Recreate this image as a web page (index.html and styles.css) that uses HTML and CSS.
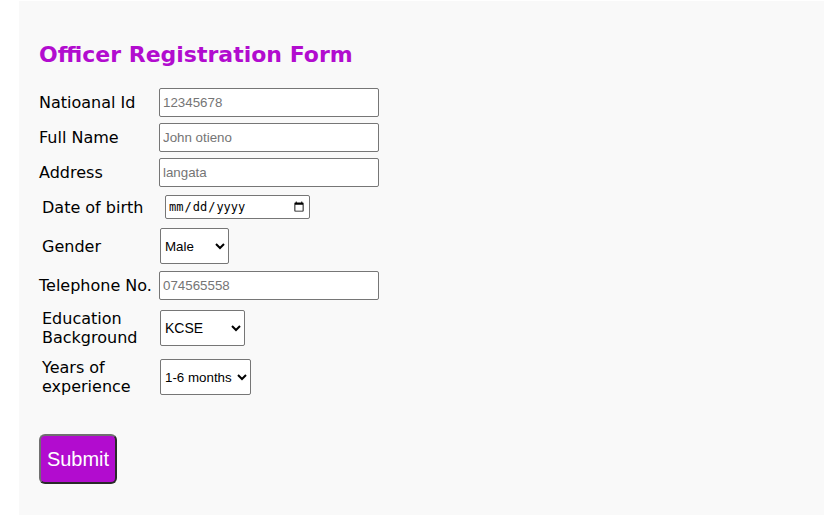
FILE: index.html
```html
<!DOCTYPE html>
<html>
<head>
<meta charset="utf-8">
<link rel="stylesheet" href="styles.css">
</head>
<body>
<div class="panel">
  <h2 class="title">Officer Registration Form</h2>
  <form class="form">
    <div class="row r1">
      <label class="lbl">Natioanal Id</label>
      <input class="txt" type="text" placeholder="12345678">
    </div>
    <div class="row r2">
      <label class="lbl">Full Name</label>
      <input class="txt" type="text" placeholder="John otieno">
    </div>
    <div class="row r3">
      <label class="lbl">Address</label>
      <input class="txt" type="text" placeholder="langata">
    </div>
    <div class="row r4">
      <label class="lbl ind">Date of birth</label>
      <input class="date" type="date">
    </div>
    <div class="row r5">
      <label class="lbl ind">Gender</label>
      <select class="sel sel-gender"><option>Male</option><option>Female</option></select>
    </div>
    <div class="row r6">
      <label class="lbl">Telephone No.</label>
      <input class="txt" type="text" placeholder="074565558">
    </div>
    <div class="row r7">
      <label class="lbl ind two">Education<br>Background</label>
      <select class="sel sel-edu"><option>KCSE</option><option>Diploma</option></select>
    </div>
    <div class="row r8">
      <label class="lbl ind two">Years of<br>experience</label>
      <select class="sel sel-years"><option>1-6 months</option><option>1-2 years</option></select>
    </div>
    <div class="actions">
      <button type="button" class="submit">Submit</button>
    </div>
  </form>
</div>
</body>
</html>
```
FILE: styles.css
```css
html, body {
  margin: 0;
  padding: 0;
  background: #ffffff;
}
.panel {
  box-sizing: border-box;
  margin: 1px 0 0 19px;
  height: 514px;
  overflow: hidden;
  background: #f9f9f9;
  padding: 40px 20px 0 20px;
  font-family: "DejaVu Sans", sans-serif;
}
.title {
  margin: 0;
  font-size: 22px;
  line-height: 27px;
  font-weight: bold;
  color: #b20ccf;
}
.form {
  display: flex;
  flex-direction: column;
  margin-top: 20px;
}
.row {
  display: flex;
  align-items: center;
}
.lbl {
  width: 120px;
  font-size: 16px;
  line-height: 19px;
  color: #000;
}
.lbl.ind {
  padding-left: 3px;
  width: 117px;
}
.r1 { height: 29px; }
.r2 { height: 29px; margin-top: 6px; }
.r3 { height: 29px; margin-top: 6px; }
.r4 { height: 24px; margin-top: 8px; }
.r5 { height: 36px; margin-top: 9px; }
.r6 { height: 29px; margin-top: 7px; }
.r7 { height: 36px; margin-top: 10px; }
.r8 { height: 36px; margin-top: 13px; }
.txt {
  box-sizing: border-box;
  width: 220px;
  height: 29px;
  margin: 0;
  padding: 1px 3px;
  border: 1px solid #767676;
  border-radius: 2px;
  background: #fff;
  font-family: "Liberation Sans", Arial, sans-serif;
  font-size: 13.33px;
}
.txt::placeholder {
  color: #757575;
}
.date {
  box-sizing: border-box;
  width: 145px;
  height: 24px;
  margin: 0 0 0 6px;
  padding: 1px 2px;
  border: 1px solid #767676;
  border-radius: 2px;
  background: #fff;
  font-family: "DejaVu Sans Mono", monospace;
  font-size: 12px;
}
.sel {
  box-sizing: border-box;
  height: 36px;
  margin: 0 0 0 1px;
  border: 1px solid #767676;
  border-radius: 2px;
  background: #fff;
  font-family: "Liberation Sans", Arial, sans-serif;
  font-size: 13.33px;
  color: #000;
}
.sel-gender { width: 69px; }
.sel-edu { width: 85px; font-size: 14px; }
.sel-years { width: 91px; }
.actions {
  margin-top: 39px;
}
.submit {
  box-sizing: border-box;
  width: 78px;
  height: 50px;
  margin: 0;
  padding: 0;
  background: #b20ccf;
  color: #fff;
  border: 2px solid;
  border-color: #707070 #2a2a2a #2a2a2a #707070;
  border-radius: 6px;
  font-family: "Liberation Sans", Arial, sans-serif;
  font-size: 20px;
}
```
